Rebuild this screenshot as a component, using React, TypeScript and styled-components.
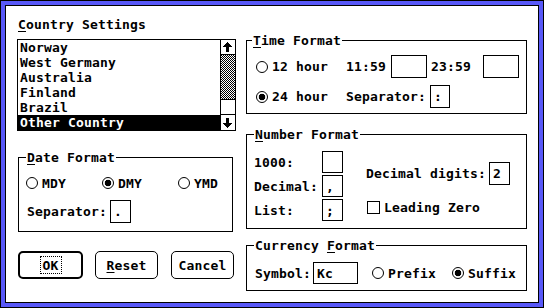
import React from "react";
import styled, {createGlobalStyle, css} from "styled-components";

const GlobalStyle = createGlobalStyle`
  html, body {
    margin: 0;
    padding: 0;
    background: #fff;
  }

  body {
    font-family: "DejaVu Sans Mono", "Liberation Mono", monospace;
    font-weight: bold;
    font-size: 13px;
    letter-spacing: 0.17px;
    line-height: 15px;
    color: #000;
  }
`;

const Frame = styled.div`
  width: 544px;
  height: 308px;
  box-sizing: border-box;
  border: 1px solid #000;
  padding: 4px;
  background: #5858f8;
`;

const Dialog = styled.div`
  height: 100%;
  box-sizing: border-box;
  border: 1px solid #000;
  background: #fff;
  padding: 11px 0 0 11px;
  display: flex;
  gap: 10px;
`;

const LeftColumn = styled.div`
  width: 219px;
  display: flex;
  flex-direction: column;
`;

const RightColumn = styled.div`
  width: 281px;
  display: flex;
  flex-direction: column;
`;

const Title = styled.div`
  margin-left: 1px;
  height: 15px;
  white-space: pre;
`;

const Mnemonic = styled.span`
  text-decoration: underline;
  text-decoration-thickness: 1px;
  text-underline-offset: 2px;
`;

const ListBox = styled.div`
  margin-top: 7px;
  height: 92px;
  box-sizing: border-box;
  border: 1px solid #000;
  display: flex;
`;

const Items = styled.ul`
  flex: 1;
  margin: 0;
  padding: 0;
  list-style: none;
`;

const Item = styled.li<{ $selected?: boolean }>`
  height: 15px;
  padding-left: 2px;
  white-space: pre;
  ${p => p.$selected && css`
    background: #000;
    color: #fff;
  `}
`;

const ScrollBar = styled.div`
  width: 15px;
  box-sizing: border-box;
  border-left: 1px solid #000;
  display: flex;
  flex-direction: column;
`;

const ArrowButton = styled.div<{ $down?: boolean }>`
  height: ${p => (p.$down ? 16 : 15)}px;
  box-sizing: border-box;
  ${p => (p.$down ? "border-top: 1px solid #000;" : "border-bottom: 1px solid #000;")}
  display: flex;
  align-items: center;
  justify-content: center;
`;

const Track = styled.div`
  flex: 1;
  display: flex;

  svg {
    display: block;
  }
`;

const Thumb = styled.div`
  height: 15px;
  box-sizing: border-box;
  border-top: 1px solid #000;
  background: #fff;
`;

const Group = styled.fieldset<{ $h: number; $top: number; $left?: number; $w?: number }>`
  margin: ${p => p.$top}px 0 0 ${p => p.$left || 0}px;
  padding: 0;
  min-width: 0;
  border: 1px solid #000;
  height: ${p => p.$h}px;
  box-sizing: border-box;
  ${p => p.$w && `width: ${p.$w}px;`}
`;

const Legend = styled.legend<{ $indent: number }>`
  margin-left: ${p => p.$indent}px;
  padding: 0 1px;
  line-height: 15px;
`;

const GroupBody = styled.div<{ $pt: number; $pl: number }>`
  padding: ${p => p.$pt}px 0 0 ${p => p.$pl}px;
  display: flex;
  flex-direction: column;
`;

const Row = styled.div<{ $h: number; $mt?: number; $ml?: number }>`
  height: ${p => p.$h}px;
  margin-top: ${p => p.$mt || 0}px;
  margin-left: ${p => p.$ml || 0}px;
  display: flex;
  align-items: center;
`;

const Caption = styled.span<{ $w: number; $pl?: number }>`
  width: ${p => p.$w}px;
  padding-left: ${p => p.$pl || 0}px;
  box-sizing: border-box;
  white-space: pre;
`;

const TextBox = styled.div<{ $w: number; $h: number }>`
  width: ${p => p.$w}px;
  height: ${p => p.$h}px;
  box-sizing: border-box;
  border: 1px solid #000;
  padding-left: 3px;
  display: flex;
  align-items: center;
  white-space: pre;
`;

const Option = styled.label<{ $w?: number; $ml?: number }>`
  ${p => p.$w && `width: ${p.$w}px;`}
  margin-left: ${p => p.$ml || 0}px;
  display: flex;
  align-items: center;
  gap: 4px;
  white-space: pre;
`;

const Radio = styled.span<{ $checked?: boolean }>`
  width: 12px;
  height: 12px;
  flex: none;
  box-sizing: border-box;
  border: 1px solid #000;
  border-radius: 50%;
  ${p => p.$checked && css`
    background: radial-gradient(circle, #000 0 3px, #fff 3.6px);
  `}
`;

const CheckBox = styled.span`
  width: 13px;
  height: 13px;
  flex: none;
  box-sizing: border-box;
  border: 1px solid #000;
`;

const SplitBody = styled.div`
  display: flex;
  padding-left: 7px;
`;

const Stack = styled.div<{ $pt: number; $ml?: number; $gap?: number }>`
  padding-top: ${p => p.$pt}px;
  margin-left: ${p => p.$ml || 0}px;
  display: flex;
  flex-direction: column;
  gap: ${p => p.$gap || 0}px;
`;

const ButtonRow = styled.div`
  margin: 19px 0 0 1px;
  display: flex;
`;

const Button = styled.button<{ $w: number; $ml?: number; $default?: boolean }>`
  width: ${p => p.$w}px;
  height: 28px;
  margin-left: ${p => p.$ml || 0}px;
  box-sizing: border-box;
  border: ${p => (p.$default ? 2 : 1)}px solid #000;
  border-radius: 5px;
  background: #fff;
  color: #000;
  font: inherit;
  letter-spacing: inherit;
  padding: 0;
  display: flex;
  align-items: center;
  justify-content: center;
`;

const FocusRing = styled.span`
  height: 18px;
  box-sizing: border-box;
  border: 1px dotted #000;
  padding: 0 2px;
  display: flex;
  align-items: center;
`;

function Arrow({down}: { down?: boolean }) {
    return (
        <svg width="14" height="14" viewBox="0 0 14 14" shapeRendering="crispEdges"
             style={down ? {transform: "scaleY(-1)"} : undefined}>
            <rect x="6" y="2" width="1" height="1"/>
            <rect x="5" y="3" width="3" height="1"/>
            <rect x="4" y="4" width="5" height="1"/>
            <rect x="3" y="5" width="7" height="1"/>
            <rect x="2" y="6" width="9" height="1"/>
            <rect x="5" y="7" width="3" height="5"/>
        </svg>
    );
}

function Stipple() {
    return (
        <svg width="14" height="44" shapeRendering="crispEdges">
            <defs>
                <pattern id="dither" width="2" height="2" patternUnits="userSpaceOnUse">
                    <rect width="2" height="2" fill="#fff"/>
                    <rect x="0" y="0" width="1" height="1" fill="#000"/>
                    <rect x="1" y="1" width="1" height="1" fill="#000"/>
                </pattern>
            </defs>
            <rect width="14" height="44" fill="url(#dither)"/>
        </svg>
    );
}

const countries = ["Norway", "West Germany", "Australia", "Finland", "Brazil", "Other Country"];

export default function App() {
    return (
        <>
            <GlobalStyle/>
            <Frame>
                <Dialog>
                    <LeftColumn>
                        <Title><Mnemonic>C</Mnemonic>ountry Settings</Title>
                        <ListBox>
                            <Items>
                                {countries.map(c => (
                                    <Item key={c} $selected={c === "Other Country"}>{c}</Item>
                                ))}
                            </Items>
                            <ScrollBar>
                                <ArrowButton><Arrow/></ArrowButton>
                                <Track><Stipple/></Track>
                                <Thumb/>
                                <ArrowButton $down><Arrow down/></ArrowButton>
                            </ScrollBar>
                        </ListBox>

                        <Group $h={82} $top={19} $left={1} $w={215}>
                            <Legend $indent={7}><Mnemonic>D</Mnemonic>ate Format</Legend>
                            <GroupBody $pt={10} $pl={7}>
                                <Row $h={16}>
                                    <Option $w={76}><Radio/>MDY</Option>
                                    <Option $w={76}><Radio $checked/>DMY</Option>
                                    <Option $w={50}><Radio/>YMD</Option>
                                </Row>
                                <Row $h={23} $mt={9} $ml={1}>
                                    <Caption $w={83}>Separator:</Caption>
                                    <TextBox $w={21} $h={23}>.</TextBox>
                                </Row>
                            </GroupBody>
                        </Group>

                        <ButtonRow>
                            <Button $w={65} $default><FocusRing>OK</FocusRing></Button>
                            <Button $w={63} $ml={12}><Mnemonic>R</Mnemonic>eset</Button>
                            <Button $w={63} $ml={13}>Cancel</Button>
                        </ButtonRow>
                    </LeftColumn>

                    <RightColumn>
                        <Group $h={81} $top={16}>
                            <Legend $indent={5}><Mnemonic>T</Mnemonic>ime Format</Legend>
                            <GroupBody $pt={7} $pl={9}>
                                <Row $h={23}>
                                    <Option $w={90}><Radio/>12 hour</Option>
                                    <Caption $w={45}>11:59</Caption>
                                    <TextBox $w={36} $h={23}/>
                                    <Caption $w={56} $pl={4}>23:59</Caption>
                                    <TextBox $w={36} $h={23}/>
                                </Row>
                                <Row $h={23} $mt={7}>
                                    <Option $w={90}><Radio $checked/>24 hour</Option>
                                    <Caption $w={84}>Separator:</Caption>
                                    <TextBox $w={20} $h={23}>:</TextBox>
                                </Row>
                            </GroupBody>
                        </Group>

                        <Group $h={102} $top={13}>
                            <Legend $indent={7}><Mnemonic>N</Mnemonic>umber Format</Legend>
                            <SplitBody>
                                <Stack $pt={9} $gap={2}>
                                    <Row $h={22}>
                                        <Caption $w={68}>1000:</Caption>
                                        <TextBox $w={21} $h={22}/>
                                    </Row>
                                    <Row $h={22}>
                                        <Caption $w={68}>Decimal:</Caption>
                                        <TextBox $w={21} $h={22}>,</TextBox>
                                    </Row>
                                    <Row $h={22}>
                                        <Caption $w={68}>List:</Caption>
                                        <TextBox $w={21} $h={22}>;</TextBox>
                                    </Row>
                                </Stack>
                                <Stack $pt={20} $ml={23} $gap={11}>
                                    <Row $h={23}>
                                        <Caption $w={123}>Decimal digits:</Caption>
                                        <TextBox $w={21} $h={23}>2</TextBox>
                                    </Row>
                                    <Row $h={23} $ml={1}>
                                        <Option><CheckBox/>Leading Zero</Option>
                                    </Row>
                                </Stack>
                            </SplitBody>
                        </Group>

                        <Group $h={53} $top={9}>
                            <Legend $indent={7}>Currency <Mnemonic>F</Mnemonic>ormat</Legend>
                            <GroupBody $pt={9} $pl={8}>
                                <Row $h={22}>
                                    <Caption $w={58}>Symbol:</Caption>
                                    <TextBox $w={45} $h={22}>Kc</TextBox>
                                    <Option $ml={14}><Radio/>Prefix</Option>
                                    <Option $ml={16}><Radio $checked/>Suffix</Option>
                                </Row>
                            </GroupBody>
                        </Group>
                    </RightColumn>
                </Dialog>
            </Frame>
        </>
    );
}
